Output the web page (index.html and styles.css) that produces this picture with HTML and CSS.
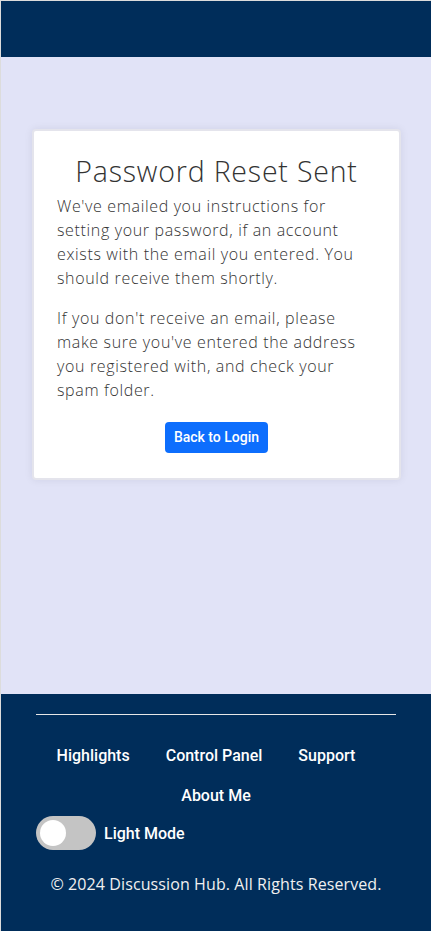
FILE: index.html
```html
<!DOCTYPE html>
<html lang="en">
<head>
<meta charset="utf-8">
<meta name="viewport" content="width=device-width, initial-scale=1">
<title>Password Reset Sent</title>
<link rel="stylesheet" href="styles.css">
</head>
<body>
<div class="page">
  <header class="topbar"></header>
  <main class="main">
    <section class="card">
      <h1 class="card-title">Password Reset Sent</h1>
      <p class="card-text">We've emailed you instructions for setting your password, if an account exists with the email you entered. You should receive them shortly.</p>
      <p class="card-text">If you don't receive an email, please make sure you've entered the address you registered with, and check your spam folder.</p>
      <div class="card-actions">
        <a class="btn" href="#">Back to Login</a>
      </div>
    </section>
  </main>
  <footer class="footer">
    <hr class="footer-rule">
    <ul class="footer-nav">
      <li class="footer-item"><a class="footer-link" href="#">Highlights</a></li>
      <li class="footer-item"><a class="footer-link" href="#">Control Panel</a></li>
      <li class="footer-item"><a class="footer-link" href="#">Support</a></li>
      <li class="footer-item footer-item-last"><a class="footer-link" href="#">About Me</a></li>
    </ul>
    <div class="mode">
      <label class="switch">
        <input type="checkbox" class="switch-input">
        <span class="switch-slider"></span>
      </label>
      <span class="mode-label">Light Mode</span>
    </div>
    <p class="copyright">© 2024 Discussion Hub. All Rights Reserved.</p>
  </footer>
</div>
</body>
</html>
```
FILE: styles.css
```css
* { box-sizing: border-box; }
html, body { margin: 0; padding: 0; height: 100%; }
body {
  font-family: "Open Sans", "Liberation Sans", sans-serif;
  font-weight: 300;
  color: #212529;
  background: #e1e3f7;
}
.page {
  min-height: 100vh;
  display: flex;
  flex-direction: column;
  border-top: 1px solid #dcdcdc;
  border-left: 1px solid #dcdcdc;
}
.topbar {
  height: 56px;
  background: #002d5a;
  flex: none;
}
.main {
  flex: 1;
  padding: 72px 30px 0 31px;
  background: #e1e3f7;
}
.card {
  background: #fff;
  border: 2px solid #e4e4ec;
  border-radius: 4px;
  box-shadow: 0 0 8px rgba(0, 0, 40, 0.08);
  padding: 23px 23px 25px 23px;
}
.card-title {
  margin: 0 0 6px;
  text-align: center;
  font-size: 28.5px;
  font-weight: 300;
  line-height: 1.2;
  color: #333;
  letter-spacing: 0.8px;
}
.card-text {
  margin: 0 0 16px;
  font-size: 16px;
  line-height: 24px;
  color: #333;
  letter-spacing: 0.65px;
}
.card-actions {
  display: flex;
  justify-content: center;
  padding-top: 4px;
}
.btn {
  display: inline-block;
  background: #0d6efd;
  color: #fff;
  font-family: Roboto, "Liberation Sans", sans-serif;
  font-weight: 500;
  font-size: 14px;
  line-height: 21px;
  padding: 5px 9px;
  border-radius: 4px;
  text-decoration: none;
}
.footer {
  background: #002d5a;
  color: #fff;
  padding: 20px 35px 35px 35px;
  flex: none;
}
.footer-rule {
  margin: 0;
  border: 0;
  border-top: 1px solid #e6e6e6;
}
.footer-nav {
  list-style: none;
  margin: 29px 0 0;
  padding: 0 20px 0 0;
  display: flex;
  flex-wrap: wrap;
  justify-content: center;
  column-gap: 36px;
  row-gap: 16px;
}
.footer-item-last { margin-left: 20px; }
.footer-link {
  color: #fff;
  text-decoration: none;
  font-family: Roboto, "Liberation Sans", sans-serif;
  font-weight: 500;
  font-size: 16px;
  line-height: 24px;
}
.mode {
  display: flex;
  align-items: center;
  gap: 8px;
  margin-top: 8px;
}
.switch {
  position: relative;
  display: inline-block;
  width: 60px;
  height: 34px;
}
.switch-input { opacity: 0; width: 0; height: 0; margin: 0; }
.switch-slider {
  position: absolute;
  inset: 0;
  background: #c4c4c4;
  border-radius: 34px;
}
.switch-slider::before {
  content: "";
  position: absolute;
  left: 4px;
  top: 4px;
  width: 26px;
  height: 26px;
  border-radius: 50%;
  background: #fff;
}
.mode-label {
  font-family: Roboto, "Liberation Sans", sans-serif;
  font-weight: 500;
  font-size: 16px;
  line-height: 24px;
  padding-top: 2px;
}
.copyright {
  margin: 22px 0 0;
  text-align: center;
  font-size: 16px;
  line-height: 24px;
  font-weight: 400;
  color: #f0f0f0;
  letter-spacing: 0.1px;
}
```
